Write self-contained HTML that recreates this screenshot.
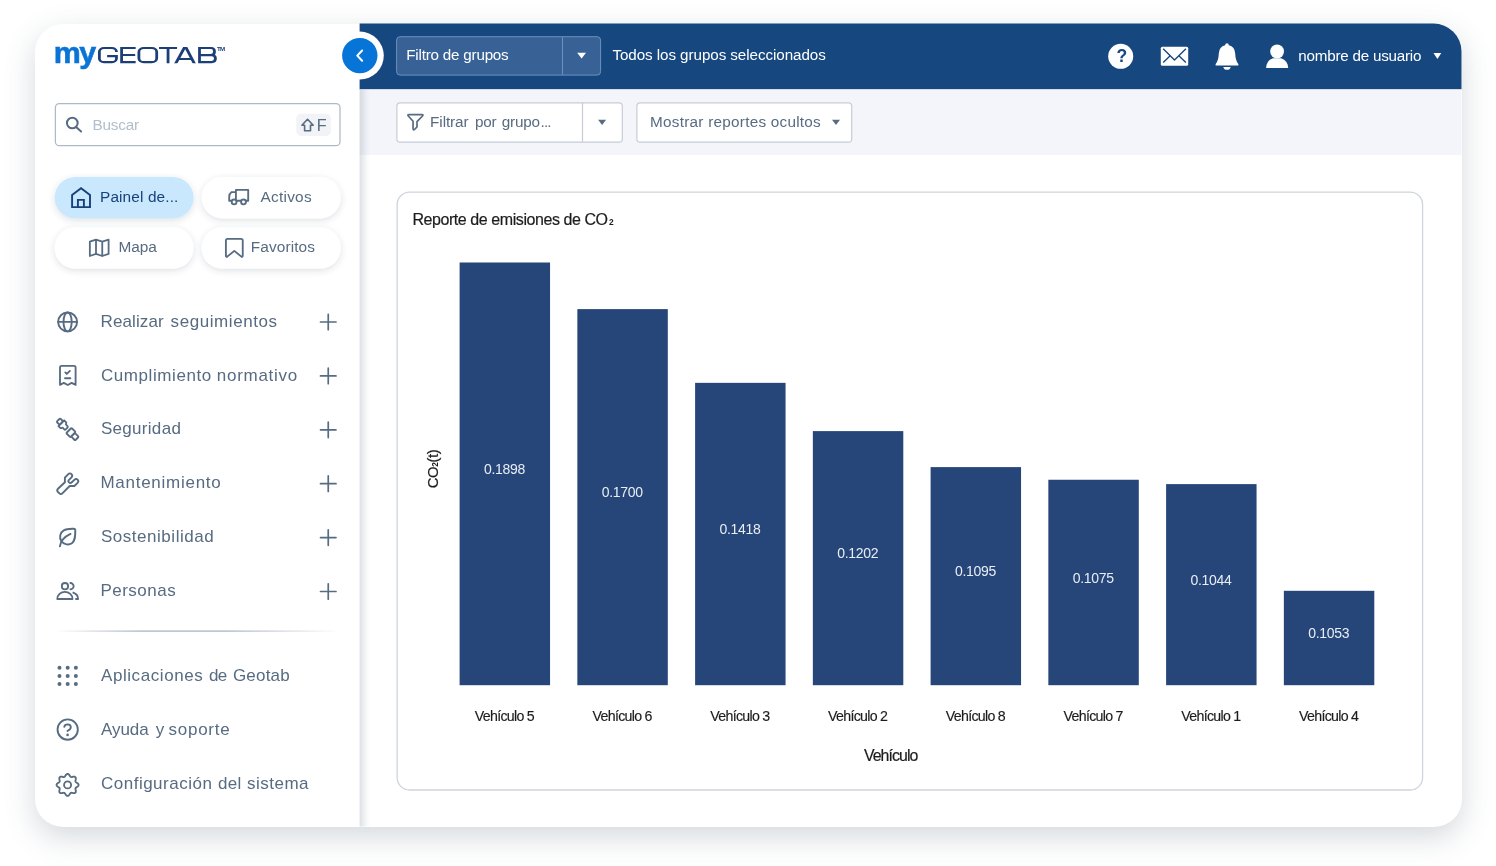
<!DOCTYPE html>
<html lang="es">
<head>
<meta charset="utf-8">
<title>MyGeotab - Reporte de emisiones de CO2</title>
<style>
html,body{margin:0;padding:0;}
body{width:1496px;height:866px;background:#ffffff;position:relative;overflow:hidden;font-family:"Liberation Sans",sans-serif;}
#win{position:absolute;left:34.5px;top:23.5px;width:1427px;height:803px;border-radius:28px;background:#fff;box-shadow:0 10px 30px rgba(60,80,100,0.22);}
#txt{position:absolute;left:0;top:0;width:1496px;height:866px;will-change:transform;}
.t{position:absolute;white-space:nowrap;}
svg{position:absolute;left:0;top:0;overflow:visible;}
</style>
</head>
<body>
<div id="win"></div>
<svg id="bg" width="1496" height="866" viewBox="0 0 1496 866">
<defs>
<clipPath id="winclip"><rect x="34.5" y="23.5" width="1427" height="803" rx="28" ry="28"/></clipPath>
<linearGradient id="sideshade" x1="0" x2="1" y1="0" y2="0">
<stop offset="0" stop-color="rgb(60,80,100)" stop-opacity="0.17"/>
<stop offset="0.35" stop-color="rgb(60,80,100)" stop-opacity="0.10"/>
<stop offset="0.7" stop-color="rgb(60,80,100)" stop-opacity="0.03"/>
<stop offset="1" stop-color="rgb(60,80,100)" stop-opacity="0"/>
</linearGradient>
<linearGradient id="divgrad" x1="0" x2="1" y1="0" y2="0">
<stop offset="0" stop-color="#a3aebb" stop-opacity="0"/>
<stop offset="0.3" stop-color="#a3aebb" stop-opacity="1"/>
<stop offset="0.6" stop-color="#a3aebb" stop-opacity="1"/>
<stop offset="1" stop-color="#a3aebb" stop-opacity="0"/>
</linearGradient>
<filter id="pillshadow" x="-20%" y="-40%" width="140%" height="200%"><feDropShadow dx="0" dy="2" stdDeviation="3.2" flood-color="rgb(60,80,100)" flood-opacity="0.17"/></filter>
</defs>
<g clip-path="url(#winclip)">
<rect x="359.6" y="23" width="1103" height="66.4" fill="#16477f"/>
<rect x="359.6" y="89.4" width="1103" height="65.5" fill="#f3f5fa"/>
<rect x="359.6" y="89.4" width="10.8" height="738" fill="url(#sideshade)"/>
</g>
<!-- header filter box -->
<rect x="396.6" y="36.7" width="204" height="38.4" rx="3.5" fill="#386296" stroke="#6d91bf" stroke-width="1"/>
<path d="M562.5 37V74.6" stroke="#6d91bf" stroke-width="1"/>
<path d="M577.2 52.7H586L581.6 58.6Z" fill="#fff"/>
<path d="M1433.5 52.9H1441.3L1437.4 59Z" fill="#fff"/>
<!-- collapse button -->
<circle cx="359.8" cy="55.6" r="24" fill="#fff"/>
<circle cx="359.8" cy="55.6" r="17.7" fill="#0774d8"/>
<path d="M362.1 50.5L357.3 55.6L362.1 60.7" fill="none" stroke="#fff" stroke-width="2.1" stroke-linecap="round" stroke-linejoin="round"/>
<!-- toolbar boxes -->
<rect x="396.9" y="102.8" width="225.4" height="39.3" rx="3.2" fill="#fff" stroke="#c6cdd7" stroke-width="1.2"/>
<path d="M582.5 102.8V142.1" stroke="#c6cdd7" stroke-width="1.2"/>
<rect x="636.9" y="102.8" width="214.8" height="39.3" rx="3.2" fill="#fff" stroke="#c6cdd7" stroke-width="1.2"/>
<path d="M598.1 119.7H606.1L602.1 124.9Z" fill="#576b81"/>
<path d="M832 119.7H840L836 124.9Z" fill="#576b81"/>
<!-- search box -->
<rect x="55.4" y="103.5" width="284.6" height="42.2" rx="4" fill="#fff" stroke="#aeb9c6" stroke-width="1.25"/>
<rect x="296.3" y="113.8" width="34.5" height="22.1" rx="4.5" fill="#f1f3f6"/>
<!-- pills -->
<g filter="url(#pillshadow)">
<rect x="54.6" y="177" width="139" height="41.4" rx="20.7" fill="#c9e8fd"/>
<rect x="201.6" y="177" width="139.2" height="41.4" rx="20.7" fill="#fff"/>
<rect x="54.6" y="227.2" width="139" height="41.5" rx="20.7" fill="#fff"/>
<rect x="201.6" y="227.2" width="139.2" height="41.5" rx="20.7" fill="#fff"/>
</g>
<!-- sidebar divider -->
<rect x="55" y="630.5" width="285" height="1.2" fill="url(#divgrad)"/>
<!-- card -->
<rect x="397.15" y="192.05" width="1025.45" height="597.95" rx="12.5" fill="#fff" stroke="#cfd5dc" stroke-width="1.3"/>
<g fill="#264679">
<rect x="459.60" y="262.50" width="90.45" height="422.70"/>
<rect x="577.35" y="309.10" width="90.45" height="376.10"/>
<rect x="695.10" y="382.85" width="90.45" height="302.35"/>
<rect x="812.85" y="431.10" width="90.45" height="254.10"/>
<rect x="930.60" y="467.10" width="90.45" height="218.10"/>
<rect x="1048.35" y="479.75" width="90.45" height="205.45"/>
<rect x="1166.10" y="484.10" width="90.45" height="201.10"/>
<rect x="1283.85" y="590.80" width="90.45" height="94.40"/>
</g>
</svg>

<svg width="1496" height="866" viewBox="0 0 1496 866" style="left:0;top:0" fill="none" stroke-linecap="round" stroke-linejoin="round">
<g stroke="#1c3f78" stroke-width="2.1" stroke-linecap="butt" stroke-linejoin="miter" transform="scale(1.33 1)">
<path d="M 87.571 51.9 V 51.77 C 87.571 49.735 86.015 48.07 84.113 48.07 H 78.180 C 76.278 48.07 74.722 49.735 74.722 51.77 V 58.41 C 74.722 60.445 76.278 62.11 78.180 62.11 H 84.113 C 86.015 62.11 87.571 60.445 87.571 58.41 V 56.1 H 80.526"/>
<path d="M 101.992 48.07 H 91.429 V 62.11 H 101.992 M 91.429 55 H 101.654"/>
<path d="M 108.120 48.07 H 114.135 C 116.162 48.07 117.820 49.825 117.820 51.97 V 58.21 C 117.820 60.355 116.162 62.11 114.135 62.11 H 108.120 C 106.094 62.11 104.436 60.355 104.436 58.21 V 51.97 C 104.436 49.825 106.094 48.07 108.120 48.07 Z"/>
<path d="M 119.579 48.07 H 133.128 M 126.353 48.07 V 63.16"/>
<path d="M 150.000 47.02 V 63.16 M 150.000 48.07 H 158.647 C 160.526 48.07 161.278 49.4 161.278 51.55 C 161.278 53.8 160.526 55.09 158.647 55.09 H 150.000 M 158.647 55.09 H 159.173 C 161.128 55.09 161.977 56.5 161.977 58.6 C 161.977 60.8 161.128 62.11 159.173 62.11 H 150.000"/>
</g>
<clipPath id="capclip"><rect x="170" y="47.02" width="30" height="16.14"/></clipPath>
<g clip-path="url(#capclip)" stroke="#1c3f78" stroke-linecap="butt"><path d="M174.89 65L186.4 44M195.09 65L184.12 44" stroke-width="2.85"/><path d="M179 58.95H191.5" stroke-width="2.0"/></g>
<g stroke="#576b81" stroke-width="2"><circle cx="72.3" cy="123" r="5.35"/><path d="M76.1 126.9L81.1 131.5"/></g>
<path d="M307.55 119.3L313.2 125.2H310.5V130.8H304.6V125.2H301.9Z" stroke="#576b81" stroke-width="1.6" stroke-linejoin="round"/>
<path d="M72.1 207.1V195L81.05 188.3L90 195V207.1ZM77.9 207.1V199.85H83.9V207.1" stroke="#17417c" stroke-width="1.9" stroke-linejoin="miter" stroke-linecap="butt"/>
<g stroke="#576b81" stroke-width="1.85"><path d="M235.9 199V189.9H248.2V200.7H246.2M240.9 200.7H236.7M231.5 200.7H229.2V196.9Q229.3 193.6 231.6 192.1H235.9"/><circle cx="234.1" cy="201.9" r="2.4"/><circle cx="243.5" cy="201.9" r="2.4"/></g>
<path d="M89.85 241.6L96 239.6L102.25 241.6L108.6 239.6V253.9L102.25 256L96 253.9L89.85 256ZM96 239.6V253.9M102.25 241.6V256" stroke="#576b81" stroke-width="1.8"/>
<path d="M225.9 255.4V240.6Q225.9 238.85 227.65 238.85H241Q242.75 238.85 242.75 240.6V255.4Q242.75 257.5 241.1 256.4L234.3 250.9L227.5 256.4Q225.9 257.5 225.9 255.4Z" stroke="#576b81" stroke-width="1.85"/>
<g stroke="#576b81" stroke-width="1.9"><circle cx="67.6" cy="321.9" r="9.45"/><ellipse cx="67.6" cy="321.9" rx="4.1" ry="9.45"/><path d="M58.1 321.9H77.1"/></g>
<g stroke="#576b81" stroke-width="1.85"><path d="M60 384.9V367.4Q60 365.8 61.6 365.8H74Q75.6 365.8 75.6 367.4V384.9L71.6 382.9L67.8 385L63.8 382.9Z"/><path d="M65.3 372.4L66.8 373.9L69.9 370.9M65 378.2H70.4" stroke-width="1.85"/></g>
<g stroke="#576b81" stroke-width="1.7" transform="translate(67.6 429.5) rotate(45) scale(1.09)"><rect x="-12.15" y="-2.4" width="3.95" height="4.6" rx="0.9"/><path d="M-8.2 -3.7H-5.8Q-5.1 -3.7 -4.9 -3Q-4.7 -2.15 -4.1 -2.15H-2.3Q-1.35 -2.15 -1.35 -1.2V1.1Q-1.35 2.05 -2.3 2.05H-4.1Q-4.7 2.05 -4.9 2.9Q-5.1 3.7 -5.8 3.7H-8.2Z"/><rect x="1.45" y="-3.55" width="5.4" height="6.8" rx="0.8"/><rect x="6.85" y="-2.5" width="5.1" height="4.75" rx="0.9"/></g>
<path d="M64.9 482.2V477.7L68.3 474.2Q69.9 472.6 71.5 474.2Q73 475.8 71.5 477.3L69 479.8Q67.6 481.2 69 482.4Q70.4 483.6 71.8 482.3L74.6 479.6Q76.1 478.2 77.6 479.7Q79.1 481.3 77.6 482.8L74.4 486H69.7L62.6 493.2Q60.9 494.9 59.2 493.2L58 492Q56.4 490.3 58 488.7Z" stroke="#576b81" stroke-width="1.9"/>
<g stroke="#576b81" stroke-width="1.9"><path d="M61.6 541.7C58.8 537.6 60 532.6 63.8 530.4C66.5 528.9 70 528.9 73.7 528.7Q75.3 528.7 75.3 530.3C75.3 537.3 75 541 71.9 543.2C68.6 545.5 64.3 544.6 61.6 541.7Z"/><path d="M59.9 546.3C60.8 540.5 65 536.5 70.5 533.9"/></g>
<g stroke="#576b81" stroke-width="1.85"><circle cx="64.96" cy="586.15" r="3.15"/><path d="M69.7 583.1A3.15 3.15 0 1 1 69.7 589.2" stroke-linecap="butt"/><path d="M57.3 598.95A7.6 7.15 0 0 1 72.5 598.95Z"/><path d="M72.6 592.3Q78.1 594 78.1 598.95H75.3" stroke-linecap="butt"/></g>
<circle cx="59.47" cy="667.65" r="2" fill="#576b81"/>
<circle cx="59.47" cy="675.88" r="2" fill="#576b81"/>
<circle cx="59.47" cy="684.07" r="2" fill="#576b81"/>
<circle cx="67.67" cy="667.65" r="2" fill="#576b81"/>
<circle cx="67.67" cy="675.88" r="2" fill="#576b81"/>
<circle cx="67.67" cy="684.07" r="2" fill="#576b81"/>
<circle cx="75.86" cy="667.65" r="2" fill="#576b81"/>
<circle cx="75.86" cy="675.88" r="2" fill="#576b81"/>
<circle cx="75.86" cy="684.07" r="2" fill="#576b81"/>
<g stroke="#576b81" stroke-width="1.9"><circle cx="67.69" cy="729.57" r="10.15"/><path d="M64.3 726.9Q64.7 724.4 67.6 724.4Q70.8 724.5 70.8 727.3Q70.8 729.5 67.5 730.9" stroke-width="1.9"/><circle cx="67.58" cy="734.9" r="1.3" fill="#576b81" stroke="none"/></g>
<g stroke="#576b81" stroke-width="1.85"><path d="M67.58 773.92L68.01 773.99L68.43 774.18L68.81 774.49L69.17 774.87L69.49 775.31L69.78 775.75L70.05 776.17L70.31 776.52L70.58 776.80L70.87 776.97L71.21 777.06L71.59 777.05L72.02 776.98L72.51 776.88L73.02 776.77L73.56 776.69L74.08 776.67L74.58 776.73L75.01 776.89L75.36 777.14L75.61 777.49L75.77 777.92L75.83 778.42L75.81 778.94L75.73 779.48L75.62 779.99L75.52 780.48L75.45 780.91L75.44 781.29L75.53 781.63L75.70 781.92L75.98 782.19L76.33 782.45L76.75 782.72L77.19 783.01L77.63 783.33L78.01 783.69L78.32 784.07L78.51 784.49L78.58 784.92L78.51 785.35L78.32 785.77L78.01 786.15L77.63 786.51L77.19 786.83L76.75 787.12L76.33 787.39L75.98 787.65L75.70 787.92L75.53 788.21L75.44 788.55L75.45 788.93L75.52 789.36L75.62 789.85L75.73 790.36L75.81 790.90L75.83 791.42L75.77 791.92L75.61 792.35L75.36 792.70L75.01 792.95L74.58 793.11L74.08 793.17L73.56 793.15L73.02 793.07L72.51 792.96L72.02 792.86L71.59 792.79L71.21 792.78L70.87 792.87L70.58 793.04L70.31 793.32L70.05 793.67L69.78 794.09L69.49 794.53L69.17 794.97L68.81 795.35L68.43 795.66L68.01 795.85L67.58 795.92L67.15 795.85L66.73 795.66L66.35 795.35L65.99 794.97L65.67 794.53L65.38 794.09L65.11 793.67L64.85 793.32L64.58 793.04L64.29 792.87L63.95 792.78L63.57 792.79L63.14 792.86L62.65 792.96L62.14 793.07L61.60 793.15L61.08 793.17L60.58 793.11L60.15 792.95L59.80 792.70L59.55 792.35L59.39 791.92L59.33 791.42L59.35 790.90L59.43 790.36L59.54 789.85L59.64 789.36L59.71 788.93L59.72 788.55L59.63 788.21L59.46 787.92L59.18 787.65L58.83 787.39L58.41 787.12L57.97 786.83L57.53 786.51L57.15 786.15L56.84 785.77L56.65 785.35L56.58 784.92L56.65 784.49L56.84 784.07L57.15 783.69L57.53 783.33L57.97 783.01L58.41 782.72L58.83 782.45L59.18 782.19L59.46 781.92L59.63 781.63L59.72 781.29L59.71 780.91L59.64 780.48L59.54 779.99L59.43 779.48L59.35 778.94L59.33 778.42L59.39 777.92L59.55 777.49L59.80 777.14L60.15 776.89L60.58 776.73L61.08 776.67L61.60 776.69L62.14 776.77L62.65 776.88L63.14 776.98L63.57 777.05L63.95 777.06L64.29 776.97L64.58 776.80L64.85 776.52L65.11 776.17L65.38 775.75L65.67 775.31L65.99 774.87L66.35 774.49L66.73 774.18L67.15 773.99Z"/><circle cx="67.58" cy="784.92" r="3.5"/></g>
<path d="M320.5 322.00H336M328.25 314.25V329.75" stroke="#576b81" stroke-width="1.7"/>
<path d="M320.5 375.90H336M328.25 368.15V383.65" stroke="#576b81" stroke-width="1.7"/>
<path d="M320.5 429.80H336M328.25 422.05V437.55" stroke="#576b81" stroke-width="1.7"/>
<path d="M320.5 483.70H336M328.25 475.95V491.45" stroke="#576b81" stroke-width="1.7"/>
<path d="M320.5 537.60H336M328.25 529.85V545.35" stroke="#576b81" stroke-width="1.7"/>
<path d="M320.5 591.50H336M328.25 583.75V599.25" stroke="#576b81" stroke-width="1.7"/>
<path d="M409 114.6H421.9Q423.7 114.6 422.5 116L417 121.7V127L414.6 129.3Q413.05 130.6 413.05 128.6V121.3L408.3 116Q407.2 114.6 409 114.6Z" stroke="#576b81" stroke-width="1.7"/>
<circle cx="1120.7" cy="56.3" r="12.5" fill="#fff"/>
<rect x="1160.8" y="46.7" width="27.4" height="19.1" rx="1.6" fill="#fff"/>
<path d="M1163.2 48.7L1174.5 60.1L1185.9 48.7M1163.2 62.6L1169.9 56.1M1185.9 62.6L1179.1 56.1" stroke="#17467e" stroke-width="1.35" stroke-linecap="butt"/>
<path d="M1227 43.3Q1228.7 43.3 1228.9 45.2Q1234.8 46.6 1235.2 53.4Q1235.5 60.3 1238 63.4Q1238.8 64.5 1238.3 65.6H1215.7Q1215.2 64.5 1216 63.4Q1218.5 60.3 1218.8 53.4Q1219.2 46.6 1225.1 45.2Q1225.3 43.3 1227 43.3Z" fill="#fff"/>
<path d="M1223.3 66.9H1230.7Q1230 69.8 1227 69.8Q1224 69.8 1223.3 66.9Z" fill="#fff"/>
<circle cx="1277.1" cy="51.5" r="6.9" fill="#fff"/>
<path d="M1266.1 68.1Q1266.5 60.5 1273 58.2H1281.2Q1287.8 60.5 1288.2 68.1Z" fill="#fff"/>
</svg>

<div id="txt">
<span class="t" style="left:53.70px;top:37.16px;font-size:30.4px;line-height:30.4px;color:#0a74d6;letter-spacing:-1.422px;font-weight:700;-webkit-text-stroke:0.6px #0a74d6;">my</span>
<span class="t" style="left:217.10px;top:46.23px;font-size:6.2px;line-height:6.2px;color:#1c3f78;letter-spacing:-0.880px;font-weight:700;">TM</span>
<span class="t" style="left:92.40px;top:116.90px;font-size:15.3px;line-height:15.3px;color:#b3becb;letter-spacing:-0.183px;">Buscar</span>
<span class="t" style="left:316.70px;top:117.13px;font-size:16.2px;line-height:16.2px;color:#576b81;letter-spacing:0.000px;">F</span>
<span class="t" style="left:100.00px;top:189.11px;font-size:15.4px;line-height:15.4px;color:#19427d;letter-spacing:0.125px;">Painel de...</span>
<span class="t" style="left:260.50px;top:188.81px;font-size:15.4px;line-height:15.4px;color:#576b81;letter-spacing:0.248px;">Activos</span>
<span class="t" style="left:118.40px;top:238.91px;font-size:15.4px;line-height:15.4px;color:#576b81;letter-spacing:-0.047px;">Mapa</span>
<span class="t" style="left:250.80px;top:238.91px;font-size:15.4px;line-height:15.4px;color:#576b81;letter-spacing:0.101px;">Favoritos</span>
<span class="t" style="left:100.50px;top:312.65px;font-size:17px;line-height:17px;color:#576b81;letter-spacing:0.115px;">Realizar</span>
<span class="t" style="left:170.60px;top:312.65px;font-size:17px;line-height:17px;color:#576b81;letter-spacing:0.576px;">seguimientos</span>
<span class="t" style="left:100.90px;top:366.55px;font-size:17px;line-height:17px;color:#576b81;letter-spacing:0.584px;">Cumplimiento</span>
<span class="t" style="left:216.80px;top:366.55px;font-size:17px;line-height:17px;color:#576b81;letter-spacing:0.714px;">normativo</span>
<span class="t" style="left:100.90px;top:420.45px;font-size:17px;line-height:17px;color:#576b81;letter-spacing:0.306px;">Seguridad</span>
<span class="t" style="left:100.40px;top:474.35px;font-size:17px;line-height:17px;color:#576b81;letter-spacing:0.738px;">Mantenimiento</span>
<span class="t" style="left:100.90px;top:528.25px;font-size:17px;line-height:17px;color:#576b81;letter-spacing:0.539px;">Sostenibilidad</span>
<span class="t" style="left:100.40px;top:582.15px;font-size:17px;line-height:17px;color:#576b81;letter-spacing:0.497px;">Personas</span>
<span class="t" style="left:101.00px;top:666.85px;font-size:17px;line-height:17px;color:#576b81;letter-spacing:0.569px;">Aplicaciones</span>
<span class="t" style="left:209.00px;top:666.85px;font-size:17px;line-height:17px;color:#576b81;letter-spacing:-0.755px;">de</span>
<span class="t" style="left:232.90px;top:666.85px;font-size:17px;line-height:17px;color:#576b81;letter-spacing:0.218px;">Geotab</span>
<span class="t" style="left:101.00px;top:720.65px;font-size:17px;line-height:17px;color:#576b81;letter-spacing:-0.060px;">Ayuda</span>
<span class="t" style="left:155.70px;top:720.65px;font-size:17px;line-height:17px;color:#576b81;letter-spacing:0.000px;">y</span>
<span class="t" style="left:168.60px;top:720.65px;font-size:17px;line-height:17px;color:#576b81;letter-spacing:0.725px;">soporte</span>
<span class="t" style="left:101.00px;top:775.45px;font-size:17px;line-height:17px;color:#576b81;letter-spacing:0.496px;">Configuración</span>
<span class="t" style="left:217.90px;top:775.45px;font-size:17px;line-height:17px;color:#576b81;letter-spacing:0.345px;">del</span>
<span class="t" style="left:247.00px;top:775.45px;font-size:17px;line-height:17px;color:#576b81;letter-spacing:0.497px;">sistema</span>
<span class="t" style="left:406.30px;top:47.28px;font-size:15.2px;line-height:15.2px;color:#ffffff;letter-spacing:-0.208px;">Filtro de grupos</span>
<span class="t" style="left:612.40px;top:47.28px;font-size:15.2px;line-height:15.2px;color:#ffffff;letter-spacing:-0.065px;">Todos los grupos seleccionados</span>
<span class="t" style="left:1298.30px;top:47.68px;font-size:15.2px;line-height:15.2px;color:#ffffff;letter-spacing:-0.218px;">nombre de usuario</span>
<span class="t" style="left:1116.50px;top:48.33px;font-size:17.5px;line-height:17.5px;color:#16477f;letter-spacing:0.000px;font-weight:700;">?</span>
<span class="t" style="left:430.10px;top:114.00px;font-size:15.3px;line-height:15.3px;color:#576b81;letter-spacing:-0.099px;">Filtrar</span>
<span class="t" style="left:475.10px;top:114.00px;font-size:15.3px;line-height:15.3px;color:#576b81;letter-spacing:-0.257px;">por</span>
<span class="t" style="left:501.70px;top:114.00px;font-size:15.3px;line-height:15.3px;color:#576b81;letter-spacing:-0.179px;">grupo</span>
<span class="t" style="left:540.60px;top:114.00px;font-size:15.3px;line-height:15.3px;color:#576b81;letter-spacing:-0.950px;">...</span>
<span class="t" style="left:650.10px;top:114.00px;font-size:15.3px;line-height:15.3px;color:#576b81;letter-spacing:0.249px;">Mostrar reportes ocultos</span>
<span class="t" style="left:412.40px;top:211.70px;font-size:16.0px;line-height:16.0px;color:#1c1c1c;letter-spacing:-0.427px;-webkit-text-stroke:0.2px #1c1c1c;">Reporte de emisiones de CO</span>
<span class="t" style="left:608.90px;top:218.16px;font-size:8.4px;line-height:8.4px;color:#1c1c1c;letter-spacing:0.000px;font-weight:700;">2</span>
<span class="t" style="left:863.90px;top:748.09px;font-size:15.9px;line-height:15.9px;color:#1c1c1c;letter-spacing:-0.918px;-webkit-text-stroke:0.2px #1c1c1c;">Vehículo</span>
<span class="t" style="left:484.03px;top:462.15px;font-size:14.0px;line-height:14.0px;color:#e9edf4;letter-spacing:-0.287px;">0.1898</span>
<span class="t" style="left:474.83px;top:709.33px;font-size:14.2px;line-height:14.2px;color:#1c1c1c;letter-spacing:-0.708px;-webkit-text-stroke:0.15px #1c1c1c;">Vehículo 5</span>
<span class="t" style="left:601.78px;top:485.45px;font-size:14.0px;line-height:14.0px;color:#e9edf4;letter-spacing:-0.287px;">0.1700</span>
<span class="t" style="left:592.58px;top:709.33px;font-size:14.2px;line-height:14.2px;color:#1c1c1c;letter-spacing:-0.708px;-webkit-text-stroke:0.15px #1c1c1c;">Vehículo 6</span>
<span class="t" style="left:719.53px;top:522.33px;font-size:14.0px;line-height:14.0px;color:#e9edf4;letter-spacing:-0.287px;">0.1418</span>
<span class="t" style="left:710.33px;top:709.33px;font-size:14.2px;line-height:14.2px;color:#1c1c1c;letter-spacing:-0.708px;-webkit-text-stroke:0.15px #1c1c1c;">Vehículo 3</span>
<span class="t" style="left:837.28px;top:546.45px;font-size:14.0px;line-height:14.0px;color:#e9edf4;letter-spacing:-0.287px;">0.1202</span>
<span class="t" style="left:828.08px;top:709.33px;font-size:14.2px;line-height:14.2px;color:#1c1c1c;letter-spacing:-0.708px;-webkit-text-stroke:0.15px #1c1c1c;">Vehículo 2</span>
<span class="t" style="left:955.03px;top:564.45px;font-size:14.0px;line-height:14.0px;color:#e9edf4;letter-spacing:-0.287px;">0.1095</span>
<span class="t" style="left:945.83px;top:709.33px;font-size:14.2px;line-height:14.2px;color:#1c1c1c;letter-spacing:-0.708px;-webkit-text-stroke:0.15px #1c1c1c;">Vehículo 8</span>
<span class="t" style="left:1072.77px;top:570.77px;font-size:14.0px;line-height:14.0px;color:#e9edf4;letter-spacing:-0.287px;">0.1075</span>
<span class="t" style="left:1063.57px;top:709.33px;font-size:14.2px;line-height:14.2px;color:#1c1c1c;letter-spacing:-0.708px;-webkit-text-stroke:0.15px #1c1c1c;">Vehículo 7</span>
<span class="t" style="left:1190.52px;top:572.95px;font-size:14.0px;line-height:14.0px;color:#e9edf4;letter-spacing:-0.287px;">0.1044</span>
<span class="t" style="left:1181.32px;top:709.33px;font-size:14.2px;line-height:14.2px;color:#1c1c1c;letter-spacing:-0.708px;-webkit-text-stroke:0.15px #1c1c1c;">Vehículo 1</span>
<span class="t" style="left:1308.27px;top:626.30px;font-size:14.0px;line-height:14.0px;color:#e9edf4;letter-spacing:-0.287px;">0.1053</span>
<span class="t" style="left:1299.07px;top:709.33px;font-size:14.2px;line-height:14.2px;color:#1c1c1c;letter-spacing:-0.708px;-webkit-text-stroke:0.15px #1c1c1c;">Vehículo 4</span>
<span class="t" style="left:433.9px;top:469.0px;font-size:14.9px;line-height:14.9px;color:#1c1c1c;letter-spacing:-0.4px;margin-right:0.4px;-webkit-text-stroke:0.2px #1c1c1c;transform:translate(-50%,-50%) rotate(-90deg);">CO<span style="font-size:8.4px;font-weight:700;-webkit-text-stroke:0;">2</span>(t)</span>
</div>
</body>
</html>
